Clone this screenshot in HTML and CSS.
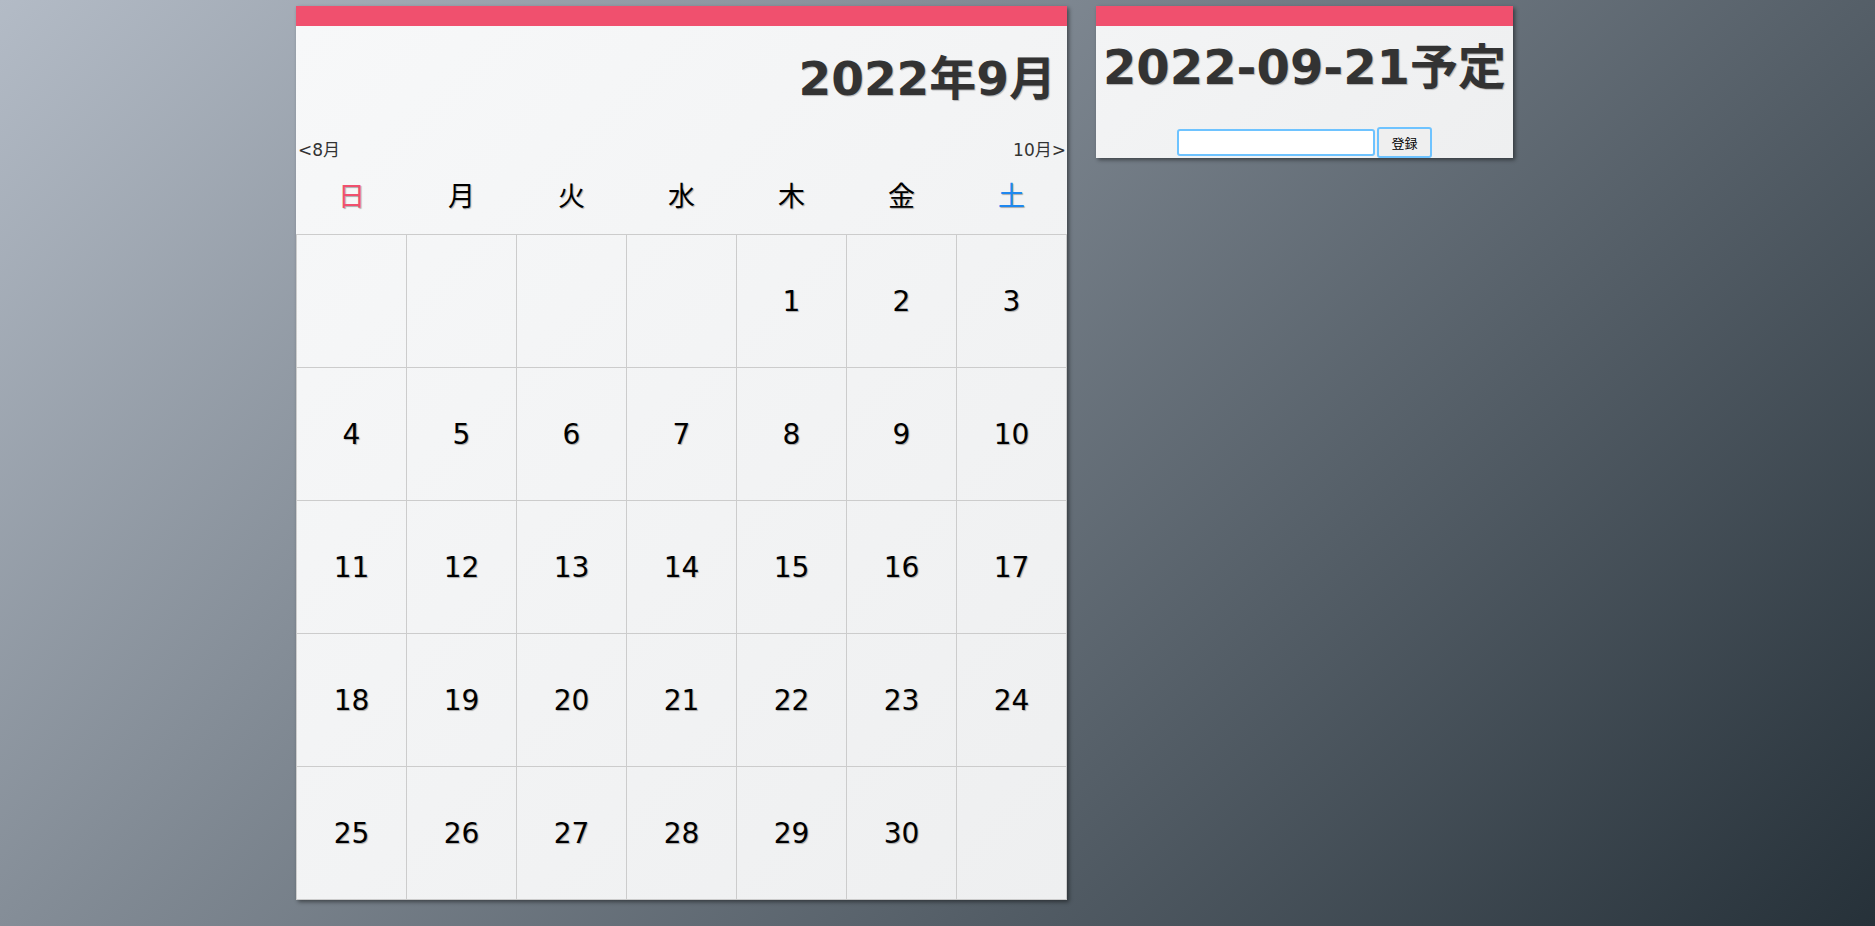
FILE: index.html
```html
<!DOCTYPE html>
<html lang="ja">

<head>
    <meta charset="UTF-8">
    <meta name="viewport" content="width=device-width, initial-scale=1.0">
    <title>カレンダー</title>
    <link rel="stylesheet" href="styles.css">
</head>

<body>
    <div class="wrapper">
        <div class="calendar">
            <h1 class="calendar-title">2022年9月</h1>
            <div class="month-nav">
                <a href="#" class="prev">&lt;8月</a>
                <a href="#" class="next">10月&gt;</a>
            </div>
            <table class="month">
                <thead>
                    <tr>
                        <th class="sun">日</th>
                        <th>月</th>
                        <th>火</th>
                        <th>水</th>
                        <th>木</th>
                        <th>金</th>
                        <th class="sat">土</th>
                    </tr>
                </thead>
                <tbody>
                    <tr>
                        <td></td><td></td><td></td><td></td>
                        <td>1</td><td>2</td><td>3</td>
                    </tr>
                    <tr>
                        <td>4</td><td>5</td><td>6</td><td>7</td>
                        <td>8</td><td>9</td><td>10</td>
                    </tr>
                    <tr>
                        <td>11</td><td>12</td><td>13</td><td>14</td>
                        <td>15</td><td>16</td><td>17</td>
                    </tr>
                    <tr>
                        <td>18</td><td>19</td><td>20</td><td>21</td>
                        <td>22</td><td>23</td><td>24</td>
                    </tr>
                    <tr>
                        <td>25</td><td>26</td><td>27</td><td>28</td>
                        <td>29</td><td>30</td><td></td>
                    </tr>
                </tbody>
            </table>
        </div>

        <div class="schedule">
            <h1 class="schedule-title">2022-09-21予定</h1>
            <form class="schedule-form">
                <input type="text" class="schedule-input">
                <button type="button" class="schedule-button">登録</button>
            </form>
        </div>
    </div>
</body>

</html>
```

FILE: styles.css
```css
body {
    font-family: 'DejaVu Sans', 'Noto Sans CJK JP', sans-serif;
    margin: 0;
    padding: 0;
    min-height: 100vh;
    background: linear-gradient(135deg, #b3bbc6, #263139);
    color: #333;
}

.wrapper {
    display: flex;
    align-items: flex-start;
    gap: 29px;
    padding: 6px 0 0 296px;
}

/* カレンダー本体 */
.calendar {
    width: 771px;
    background: linear-gradient(135deg, #f7f8f9, #eeeff0);
    border-top: 20px solid #f0506e;
    box-shadow: 2px 2px 4px rgba(0, 0, 0, 0.45);
}

.calendar-title {
    margin: 25px 11px 33px 0;
    font-size: 47px;
    line-height: 56px;
    text-align: right;
    text-shadow: 1px 1px 1px rgba(0, 0, 0, 0.25);
}

.month-nav {
    display: flex;
    justify-content: space-between;
    padding: 0 1px 0 2px;
    font-size: 17px;
    line-height: 20px;
}

.month-nav a {
    color: #333;
    text-decoration: none;
}

.month {
    width: 100%;
    border-collapse: collapse;
    table-layout: fixed;
}

.month th {
    height: 69px;
    padding: 0 0 5px 0;
    font-size: 27px;
    font-weight: normal;
    color: #000;
    text-shadow: 1px 1px 1px rgba(0, 0, 0, 0.3);
}

.month th.sun {
    color: #f0506e;
}

.month th.sat {
    color: #1e88f0;
}

.month td {
    height: 132px;
    padding: 0;
    border: 1px solid #ccc;
    text-align: center;
    vertical-align: middle;
    font-size: 28px;
    color: #000;
    text-shadow: 1px 1px 1px rgba(0, 0, 0, 0.3);
}

/* 予定パネル */
.schedule {
    width: 417px;
    background: linear-gradient(135deg, #f3f4f5, #eeeff0);
    border-top: 20px solid #f0506e;
    box-shadow: 2px 2px 4px rgba(0, 0, 0, 0.45);
}

.schedule-title {
    margin: 13px 0 32px 0;
    font-size: 48px;
    line-height: 56px;
    text-align: center;
    text-shadow: 1px 1px 1px rgba(0, 0, 0, 0.25);
}

.schedule-form {
    display: flex;
    justify-content: center;
    align-items: center;
    gap: 2px;
    margin: 0;
}

.schedule-input {
    width: 198px;
    height: 27px;
    box-sizing: border-box;
    border: 2px solid #6ec3ff;
    border-radius: 3px;
    background: #fff;
    padding: 0 4px;
    outline: none;
}

.schedule-button {
    width: 55px;
    height: 31px;
    box-sizing: border-box;
    border: 2px solid #6ec3ff;
    border-radius: 3px;
    background: #efefef;
    font-family: 'Noto Sans CJK JP', sans-serif;
    font-size: 13px;
    color: #000;
    cursor: pointer;
}
```
